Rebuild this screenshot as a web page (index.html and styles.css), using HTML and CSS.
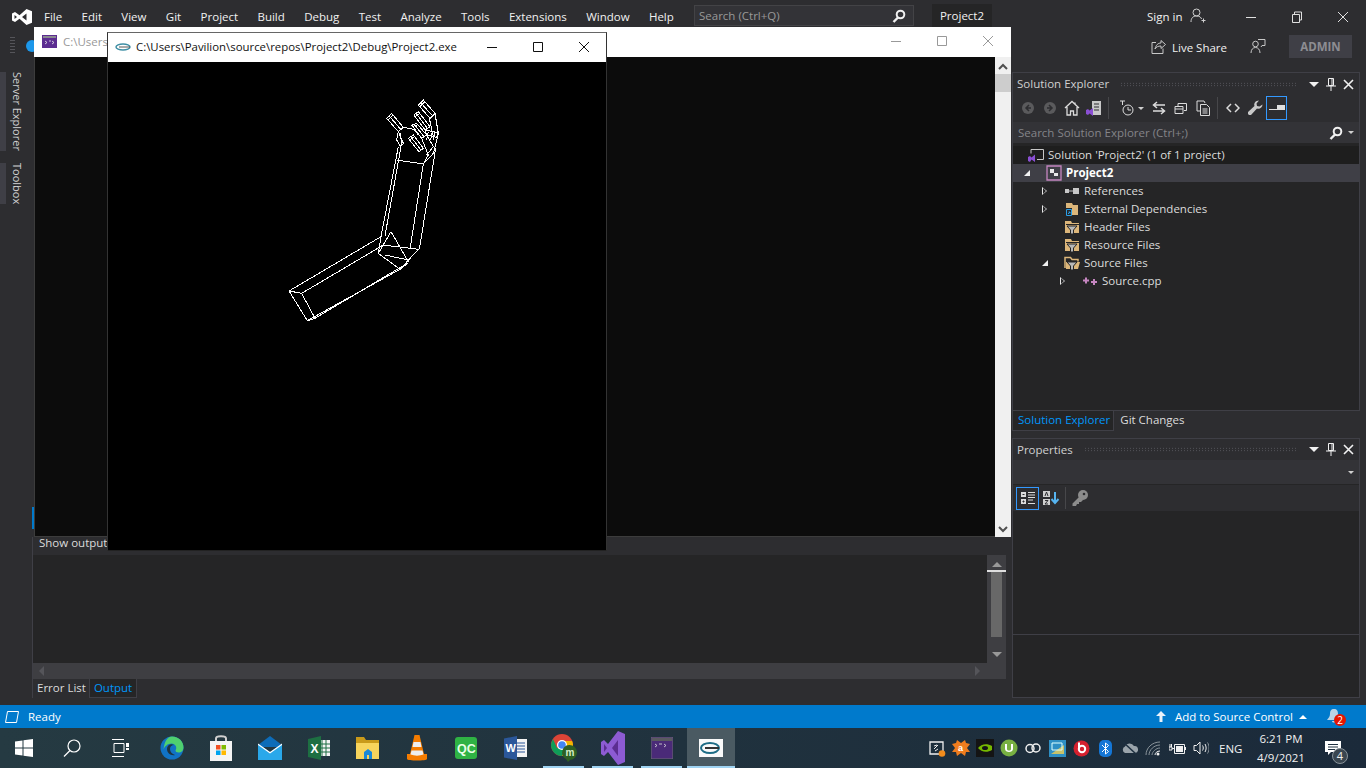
FILE: index.html
```html
<!DOCTYPE html>
<html lang="en">
  <head>
    <meta charset="UTF-8" />
    <title>Project2 - Microsoft Visual Studio</title>
    <link rel="stylesheet" href="styles.css">
  </head>

  <body>
    <div class="desktop">
      <div class="vs">
        <header class="titlebar">
          <svg class="vs-logo" width="20" height="16" viewBox="0 0 20 16"><path fill="#fff" fill-rule="evenodd" d="M14.5 0L20 2.3V13.7L14.5 16L7.5 9.8L3 13L0 11.5V4.5L3 3L7.5 6.2ZM14.5 4.5L10 8L14.5 11.5ZM2.5 6V10L5 8Z"/></svg>
          <nav class="menu">
            <span>File</span><span>Edit</span><span>View</span><span>Git</span><span>Project</span><span>Build</span><span>Debug</span><span>Test</span><span>Analyze</span><span>Tools</span><span>Extensions</span><span>Window</span><span>Help</span>
          </nav>
          <div class="quick-search">
            <span>Search (Ctrl+Q)</span>
            <svg width="14" height="14" viewBox="0 0 14 14"><circle cx="8.5" cy="5.5" r="3.8" fill="none" stroke="#f1f1f1" stroke-width="2"/><path d="M6 8.5L1.5 13" stroke="#f1f1f1" stroke-width="2.4"/></svg>
          </div>
          <div class="solution-name">Project2</div>
          <div class="signin">Sign in
            <svg width="16" height="16" viewBox="0 0 16 16" fill="none" stroke="#d0d0d0"><circle cx="6.5" cy="4.5" r="3.5"/><path d="M1 14c0-4 2-6 5.500-6s4.500 1.500 5 3M11.500 12.500h4M13.500 10.500v4"/></svg>
          </div>
          <div class="win-btns">
            <svg width="12" height="12" viewBox="0 0 12 12"><path d="M1 6.500h10" stroke="#e0e0e0"/></svg>
            <svg width="12" height="12" viewBox="0 0 12 12" fill="none" stroke="#e0e0e0"><path d="M1.500 3.500h7v8h-7zM3.500 3.500v-2.500h7v8h-2"/></svg>
            <svg width="12" height="12" viewBox="0 0 12 12"><path d="M1 1l10 10M11 1l-10 10" stroke="#e0e0e0"/></svg>
          </div>
        </header>

        <div class="cmdbar">
          <div class="gripper"></div>
          <svg class="nav-back" width="12" height="12" viewBox="0 0 12 12"><circle cx="6" cy="6" r="6" fill="#1c97ea"/></svg>
          <div class="cmd-right">
            <svg width="15" height="15" viewBox="0 0 15 15" fill="none" stroke="#c8c8c8"><path d="M5 3.500H1v11h11v-5M4 10c1-4 3-6 6-6V1.500l4.500 4-4.500 4V7c-3 0-5 1-6 3z"/></svg>
            <span class="live-share">Live Share</span>
            <svg class="feedback" width="16" height="16" viewBox="0 0 16 16" fill="none" stroke="#c8c8c8"><circle cx="5.500" cy="6" r="2.800"/><path d="M1 15c0-3.500 2-5.500 4.500-5.500S10 11.500 10 15M8 1.500h7v6h-3l-1 1.500"/></svg>
            <div class="admin">ADMIN</div>
          </div>
        </div>

        <div class="workspace">
          <aside class="strip">
            <div class="strip-tab">Server Explorer</div>
            <div class="strip-tab">Toolbox</div>
          </aside>

          <main class="center">
            <div class="doc-area"><div class="doc-mark"></div></div>
            <section class="output">
              <div class="show-row">Show output</div>
              <div class="out-body">
                <div class="out-text"></div>
                <div class="vscroll">
                  <i class="tri up"></i>
                  <div class="vline"></div>
                  <div class="vthumb"></div>
                  <i class="tri down"></i>
                </div>
              </div>
              <div class="hscroll"><i class="tri left"></i><i class="tri right"></i></div>
              <div class="out-tabs">
                <span class="out-tab">Error List</span>
                <span class="out-tab current">Output</span>
              </div>
            </section>
          </main>

          <aside class="side-col">
            <section class="panel explorer">
              <div class="panel-head">
                <span>Solution Explorer</span>
                <div class="dots"></div>
                <i class="tri down small"></i>
                <svg width="10" height="13" viewBox="0 0 10 13" fill="none" stroke="#f1f1f1"><path d="M2.500.5h5v7h-5zM0 8h10M5 8v5M6 1v6" /></svg>
                <svg width="11" height="11" viewBox="0 0 11 11"><path d="M1 1l9 9M10 1l-9 9" stroke="#f1f1f1" stroke-width="1.600"/></svg>
              </div>
              <div class="se-tools">
                <span class="tool"><svg width="16" height="16" viewBox="0 0 16 16"><circle cx="8" cy="8" r="6" fill="#5a5a5c"/><path d="M9 5L6 8l3 3M6 8h5" stroke="#2d2d30" stroke-width="1.500" fill="none"/></svg></span>
                <span class="tool"><svg width="16" height="16" viewBox="0 0 16 16"><circle cx="8" cy="8" r="6" fill="#5a5a5c"/><path d="M7 5l3 3-3 3M10 8H5" stroke="#2d2d30" stroke-width="1.500" fill="none"/></svg></span>
                <span class="tool"><svg width="16" height="16" viewBox="0 0 16 16" fill="none" stroke="#dcdcdc" stroke-width="1.300"><path d="M1 8l7-6.500L15 8M3 7v8h3.500v-4h3v4H13V7M11 2.500v2.500"/></svg></span>
                <span class="tool"><svg width="16" height="16" viewBox="0 0 16 16"><path fill="#c8c8c8" d="M6 1h9v14H6z"/><path d="M8 4h5M8 7h5M8 10h5" stroke="#2d2d30"/><path fill="#8a4fd3" d="M0 10l2-1 1.500 1.500L7 8v8l-3.500-2.500L2 15l-2-1z"/></svg></span>
                <span class="tool-sep first"></span>
                <span class="tool"><svg width="16" height="16" viewBox="0 0 16 16" fill="none" stroke="#dcdcdc"><circle cx="9" cy="10" r="5"/><path d="M9 7v3h3M1 1h5M3.500 1v4"/></svg></span>
                <span class="tool-drop"><i class="tri down tiny"></i></span>
                <span class="tool"><svg width="16" height="14" viewBox="0 0 16 14" fill="none" stroke="#dcdcdc" stroke-width="1.500"><path d="M14 4H3M6 1L2.500 4 6 7M2 10h11M10 7l3.500 3-3.500 3"/></svg></span>
                <span class="tool"><svg width="14" height="14" viewBox="0 0 14 14" fill="none" stroke="#dcdcdc"><path d="M1 5.500h8v7H1zM4 5V2.500h8.500v7H10M1 8h8"/></svg></span>
                <span class="tool"><svg width="15" height="16" viewBox="0 0 15 16" fill="none" stroke="#dcdcdc"><path d="M1 1h7l1 2M1 1v10h3M4.500 4.500h6l3 3v8h-9zM6.500 9h5M6.500 11h5M6.500 13h5"/></svg></span>
                <span class="tool-sep"></span>
                <span class="tool"><svg width="14" height="10" viewBox="0 0 14 10" fill="none" stroke="#dcdcdc" stroke-width="1.500"><path d="M5 1L1 5l4 4M9 1l4 4-4 4"/></svg></span>
                <span class="tool"><svg width="16" height="16" viewBox="0 0 16 16"><path fill="#c8c8c8" d="M15.500 4.500c0 3-3 5-5.500 4L4 15H2L1 14v-2l6.500-6c-1-2.500 1-5.500 4.500-5.500L9.500 3.500l.5 2.500 2.500.5z"/></svg></span>
                <span class="tool active"><svg width="16" height="6" viewBox="0 0 16 6"><path fill="#e0e0e0" d="M8 0h8v5H8z"/><path d="M0 4.500h8" stroke="#e0e0e0"/></svg></span>
              </div>
              <div class="se-search">
                <span>Search Solution Explorer (Ctrl+;)</span>
                <svg width="14" height="14" viewBox="0 0 14 14"><circle cx="8.500" cy="5.500" r="3.800" fill="none" stroke="#f1f1f1" stroke-width="2"/><path d="M6 8.500L1.500 13" stroke="#f1f1f1" stroke-width="2.400"/></svg>
                <i class="tri down tiny"></i>
              </div>
              <ul class="tree">
                <li class="node dark lvl-0">
                  <svg class="ico" width="16" height="14" viewBox="0 0 16 14"><path d="M3 1.500h12.500v10H9" fill="none" stroke="#c8c8c8"/><path d="M3 1.500v4" stroke="#c8c8c8"/><path fill="#8a4fd3" d="M0 9l2-1 1.500 1.500L7 6.500v7.500l-3.500-2.500L2 14l-2-1z"/></svg>
                  <span>Solution 'Project2' (1 of 1 project)</span>
                </li>
                <li class="node selected lvl-1">
                  <i class="exp open"></i>
                  <svg class="ico" width="16" height="16" viewBox="0 0 16 16"><path d="M1 1h14v14H1z" fill="none" stroke="#c586c0" stroke-width="1.300"/><path d="M4 4h4v4H4zM8 8h4v3H8z" fill="#e8e8e8"/></svg>
                  <b>Project2</b>
                </li>
                <li class="node lvl-2">
                  <i class="exp closed"></i>
                  <svg class="ico" width="16" height="8" viewBox="0 0 16 8"><path fill="#c8c8c8" d="M1 2h4v4H1zM9 1h6v6H9z"/><path d="M5 4h4" stroke="#c8c8c8"/></svg>
                  <span>References</span>
                </li>
                <li class="node lvl-2">
                  <i class="exp closed"></i>
                  <svg class="ico" width="16" height="15" viewBox="0 0 16 15"><path fill="#dcb67a" d="M2 1h6l1 2h5v10H2z"/><path fill="#252526" d="M1 6h7v9H1z"/><path d="M2.500 7.500h5v6h-5z" fill="none" stroke="#2b9fe6"/><path d="M4 12l2-2M4.500 10H6v1.500" stroke="#2b9fe6" fill="none"/></svg>
                  <span>External Dependencies</span>
                </li>
                <li class="node lvl-2">
                  <span class="exp"></span>
                  <svg class="ico" width="16" height="14" viewBox="0 0 16 14"><path fill="#dcb67a" d="M1 1h6l1 2h7v10H1z"/><path fill="#252526" d="M2 4h13v1H2z"/><path fill="#b8b8b8" stroke="#252526" d="M3 6h10L9.500 10v4h-3v-4z"/></svg>
                  <span>Header Files</span>
                </li>
                <li class="node lvl-2">
                  <span class="exp"></span>
                  <svg class="ico" width="16" height="14" viewBox="0 0 16 14"><path fill="#dcb67a" d="M1 1h6l1 2h7v10H1z"/><path fill="#252526" d="M2 4h13v1H2z"/><path fill="#b8b8b8" stroke="#252526" d="M3 6h10L9.500 10v4h-3v-4z"/></svg>
                  <span>Resource Files</span>
                </li>
                <li class="node lvl-2">
                  <i class="exp open"></i>
                  <svg class="ico" width="16" height="14" viewBox="0 0 16 14"><path fill="none" stroke="#dcb67a" stroke-width="1.500" d="M1 12V1.500h5.500L8 3.500h6v2"/><path fill="#dcb67a" d="M2 6h14l-2 7H2z"/><path fill="#b8b8b8" stroke="#252526" d="M3 6h10L9.500 10v4h-3v-4z"/></svg>
                  <span>Source Files</span>
                </li>
                <li class="node lvl-3">
                  <i class="exp closed"></i>
                  <svg class="ico" width="14" height="8" viewBox="0 0 14 8"><path fill="none" stroke="#c586c0" stroke-width="2" d="M0 3.500h6M3 .5v6M8 5h6M11 2v6"/></svg>
                  <span>Source.cpp</span>
                </li>
              </ul>
            </section>
            <div class="panel-tabs">
              <span class="panel-tab current">Solution Explorer</span>
              <span class="panel-tab">Git Changes</span>
            </div>

            <section class="panel props">
              <div class="panel-head">
                <span>Properties</span>
                <div class="dots"></div>
                <i class="tri down small"></i>
                <svg width="10" height="13" viewBox="0 0 10 13" fill="none" stroke="#f1f1f1"><path d="M2.500.5h5v7h-5zM0 8h10M5 8v5M6 1v6" /></svg>
                <svg width="11" height="11" viewBox="0 0 11 11"><path d="M1 1l9 9M10 1l-9 9" stroke="#f1f1f1" stroke-width="1.600"/></svg>
              </div>
              <div class="prop-combo"><i class="tri down tiny"></i></div>
              <div class="prop-tools">
                <span class="ptool active"><svg width="16" height="14" viewBox="0 0 16 14"><path fill="#dcdcdc" d="M1 1h5v5H1zM1 8h5v5H1z"/><path d="M2.500 3.500h2M2.500 10.500h2M3.500 9.500v2" stroke="#2d2d30"/><path d="M8 1.500h7M8 4h7M8 6.500h7M8 9h5M8 12.500h7" stroke="#dcdcdc"/></svg></span>
                <span class="ptool"><svg width="18" height="16" viewBox="0 0 18 16"><path fill="#d0d0d0" d="M1 1h7v6H1zM1 9h7v6H1z"/><path d="M3 6l1.500-4L6 6M3 10.500h3L3 14h3" stroke="#2d2d30" fill="none"/><path d="M13 2v11M9.500 9l3.500 4 3.500-4" stroke="#56b4f0" stroke-width="2" fill="none"/></svg></span>
                <span class="ptool-sep"></span>
                <span class="ptool"><svg width="18" height="18" viewBox="0 0 18 18"><circle cx="12" cy="6" r="5" fill="#8c8c8c"/><path d="M9 7L1.500 14.500V17H5l1-2h2v-2h2l2-2z" fill="#8c8c8c"/><circle cx="13" cy="5" r="1.300" fill="#2d2d30"/></svg></span>
              </div>
              <div class="prop-grid"></div>
              <div class="prop-desc"></div>
            </section>
          </aside>
        </div>
      </div>

      <footer class="status">
        <svg width="16" height="14" viewBox="0 0 16 14"><path d="M3.500 1.500h11l-2 11h-11z" fill="none" stroke="#fff"/></svg>
        <span class="ready">Ready</span>
        <svg class="up-arrow" width="10" height="11" viewBox="0 0 10 11"><path fill="#e8f2fa" d="M5 0l5 5H6.500v6h-3V5H0z"/></svg>
        <span class="source-ctl">Add to Source Control</span>
        <i class="tri up tiny"></i>
        <span class="bell">
          <svg width="14" height="15" viewBox="0 0 14 15"><path fill="#b9d3e8" d="M7 0c3 0 4 2 4 5 0 3 2 4 3 6H0c1-2 3-3 3-6 0-3 1-5 4-5zM5 12h4c0 2-4 2-4 0z"/></svg>
          <b class="badge">2</b>
        </span>
      </footer>

      <footer class="taskbar">
        <span class="task wide"><svg width="18" height="18" viewBox="0 0 18 18" fill="#fff"><path d="M0 2.500l7.500-1v7H0zM8.500 1.300L18 0v8.500H8.500zM0 9.500h7.500v7l-7.500-1zM8.500 9.500H18V18l-9.500-1.300z"/></svg></span>
        <span class="task wide"><svg width="18" height="18" viewBox="0 0 18 18" fill="none" stroke="#fff" stroke-width="1.200"><circle cx="11" cy="7" r="6"/><path d="M7 11.500L1 17.500"/></svg></span>
        <span class="task wide last"><svg width="18" height="18" viewBox="0 0 18 18" fill="none" stroke="#fff"><path d="M1 .5h12M3 4.500h10v9H3zM1 17.500h12"/><path fill="#fff" d="M15 4h3v4h-3zM15 9h3v2h-3z" stroke="none"/></svg></span>

        <span class="task"><svg width="24" height="24" viewBox="0 0 24 24"><circle cx="12" cy="12" r="11.500" fill="#1173c5"/><path fill="#4fd06f" d="M12 .5c7 0 11.500 5 11.500 11 0 3-2 5-5 5-2 0-3-1-3-2 2-3 0-7-4-7-4 0-7 3-8 6C4.500 6 7 .5 12 .5z"/><path fill="#1e3440" d="M7 13c0 4 4 7 8 6-3-1-5-3-5-6s2-4 4-4c-3-2-7 0-7 4z"/></svg></span>
        <span class="task"><svg width="24" height="26" viewBox="0 0 24 26"><path d="M7 7V3.500C7 .5 17 .5 17 3.500V7" fill="none" stroke="#d0d0d0" stroke-width="2"/><path fill="#f4f4f4" d="M1 6h22v20H1z"/><path fill="#f25022" d="M7 10h4.500v4.500H7z"/><path fill="#7fba00" d="M12.500 10H17v4.500h-4.500z"/><path fill="#00a4ef" d="M7 15.500h4.500V20H7z"/><path fill="#ffb900" d="M12.500 15.500H17V20h-4.500z"/></svg></span>
        <span class="task"><svg width="24" height="24" viewBox="0 0 24 24"><path fill="#0d6cb8" d="M12 0L0 9v2h24V9z"/><path fill="#29a8ea" d="M0 8l12 8 12-8v16H0z"/><path fill="#fff" d="M0 7.500l12 8.500 12-8.500v1.500l-12 8.500L0 9z"/></svg></span>
        <span class="task"><svg width="24" height="24" viewBox="0 0 24 24"><path fill="#f4f4f4" d="M12 4h11v16H12z"/><path d="M15 4v16M19 4v16M12 8h11M12 12h11M12 16h11" stroke="#1d6f42"/><path fill="#1d6f42" d="M1 3l13-3v24L1 21z"/><text class="glyph" x="3.500" y="16.500" font-size="12" fill="#fff">X</text></svg></span>
        <span class="task"><svg width="24" height="24" viewBox="0 0 24 24"><path fill="#c99a1a" d="M0 1h8l2 3h13v5H0z"/><path fill="#f7d45c" d="M0 7h23v16H0z"/><path fill="#1a88d8" d="M8 23v-7l4-3 4 3v7h-3v-4h-2v4z"/></svg></span>
        <span class="task"><svg width="22" height="26" viewBox="0 0 22 26"><path fill="#f57c00" d="M8.500 0h5L18 19h3v5c0 2-20 2-20 0v-5h3z"/><path fill="#eee" d="M7.500 7h7l1 5h-9zM5.500 15.500h11l1 4c-4 1.500-9 1.500-13 0z"/></svg></span>
        <span class="task"><svg width="24" height="24" viewBox="0 0 24 24"><rect x="1" y="1" width="22" height="22" rx="3" fill="#2fb344"/><text class="glyph" x="3" y="17" font-size="12.500" fill="#e8ffe8">QC</text></svg></span>
        <span class="task"><svg width="24" height="24" viewBox="0 0 24 24"><path fill="#f4f4f4" d="M11 3h13v18H11z"/><path d="M14 7h8M14 10h8M14 13h8M14 16h8" stroke="#2b579a"/><path fill="#2b579a" d="M1 2.500L14 0v24L1 21.500z"/><text class="glyph" x="2.500" y="16" font-size="11" fill="#fff">W</text></svg></span>
        <span class="task running"><svg width="26" height="28" viewBox="0 0 26 28"><circle cx="11" cy="11" r="11" fill="#db4437"/><path fill="#0f9d58" d="M0 11c0 6 5 11 11 11l5-8H6L2 5C1 7 0 9 0 11z"/><path fill="#f4b400" d="M11 22c6 0 11-5 11-11 0-2-.5-3-1-4H11l5 7z"/><circle cx="11" cy="11" r="5" fill="#fff"/><circle cx="11" cy="11" r="3.800" fill="#4285f4"/><path fill="#2e5f24" d="M18 11a7.500 7.500 0 0 1 1 15l-2 2-2-3a7.500 7.500 0 0 1 3-14z"/><text class="glyph" x="14.500" y="22" font-size="10" fill="#d8f0c8">m</text></svg></span>
        <span class="task running"><svg width="24" height="34" viewBox="0 0 24 34"><path fill="#8d5bd3" d="M17 0l7 3v28l-7 3L7 21l-4 4-3-2V11l3-2 4 4z"/><path fill="#5c2d91" d="M17 9l-6 8 6 8zM3 13v8l3-4z"/></svg></span>
        <span class="task running"><svg width="22" height="22" viewBox="0 0 22 22"><rect width="22" height="22" fill="#4a2a78" stroke="#6a6a70"/><path d="M1 1h20v3H1z" fill="#5a5a60"/><path d="M4 7l2 1.500L4 10M8 7h3M13 7l2 1.500L13 10" stroke="#ddd" fill="none" stroke-width=".8"/></svg></span>
        <span class="task current"><svg width="24" height="18" viewBox="0 0 24 18"><rect width="24" height="18" fill="#fafafa"/><ellipse cx="11" cy="9" rx="9" ry="5" fill="none" stroke="#1f6d86" stroke-width="2"/><path d="M6 9h14" stroke="#333" stroke-width="2"/></svg></span>

        <div class="tray">
          <span class="tray-ico"><svg width="17" height="17" viewBox="0 0 17 17"><path d="M1 2h13v12H1z" fill="none" stroke="#f0f0f0" stroke-width="1.300"/><path d="M5 9l4-4M5 6l3-1M9 9L6 11" stroke="#f0f0f0"/><circle cx="13" cy="13.500" r="3.300" fill="#f28c1c"/></svg></span>
          <span class="tray-ico"><svg width="18" height="18" viewBox="0 0 18 18"><path fill="#f07d1e" d="M9 4l4-3 1 3 4 1-3 4 3 4-4 0-1 4-4-3-4 3-1-4-4 0 3-4-3-4 4-1 1-3z"/><text class="glyph" x="6" y="12" font-size="9" fill="#fff">a</text></svg></span>
          <span class="tray-ico"><svg width="18" height="18" viewBox="0 0 18 18"><rect width="18" height="18" fill="#141414"/><path d="M2 9c3-4 9-5 14-2v4c-5 3-11 2-14-2z" fill="#76b900"/><ellipse cx="9" cy="9" rx="3" ry="2" fill="#141414"/></svg></span>
          <span class="tray-ico"><svg width="18" height="18" viewBox="0 0 18 18"><circle cx="9" cy="9" r="8.500" fill="#78b042"/><path d="M5 5v5c0 4 8 4 8 0V5h-2v5c0 2-4 2-4 0V5z" fill="#fff"/></svg></span>
          <span class="tray-ico"><svg width="16" height="12" viewBox="0 0 16 12" fill="none" stroke="#f0f0f0" stroke-width="1.500"><circle cx="5" cy="6.500" r="4"/><circle cx="11" cy="6" r="4"/></svg></span>
          <span class="tray-ico"><svg width="17" height="17" viewBox="0 0 17 17"><rect width="17" height="17" fill="#2e8fc4"/><path d="M2 14L15 5v9z" fill="#c8c26a"/><path d="M3 3h10v7H3z" fill="none" stroke="#dff"/></svg></span>
          <span class="tray-ico"><svg width="17" height="17" viewBox="0 0 17 17"><circle cx="8.500" cy="8.500" r="8" fill="#d5202e"/><circle cx="9" cy="9" r="3.200" fill="none" stroke="#fff" stroke-width="2"/><path d="M6 2.500v6" stroke="#fff" stroke-width="2"/></svg></span>
          <span class="tray-ico"><svg width="13" height="17" viewBox="0 0 13 17"><rect width="13" height="17" rx="5" fill="#1476d6"/><path d="M3 5l6.500 6.500L6.500 14V3l3 2.500L3 12" fill="none" stroke="#fff"/></svg></span>
          <span class="tray-ico"><svg width="17" height="12" viewBox="0 0 17 12"><path fill="#9aa4ab" d="M4 11a3.500 3.500 0 0 1 0-6.500 5 5 0 0 1 9-.5 3.500 3.500 0 0 1 1 7z"/><path d="M2 0l13 12" stroke="#1e3040" stroke-width="1.500"/></svg></span>
          <span class="tray-ico"><svg width="16" height="15" viewBox="0 0 16 15" fill="none" stroke="#8a949b"><path d="M1 14C1 7 7 1 15 1M4 14c0-5 5-10 11-10M7 14c0-3 4-7 8-7"/><path d="M10 14c0-2 2-4 5-4" stroke="#f0f0f0"/><circle cx="13" cy="13" r="1.500" fill="#f0f0f0" stroke="none"/></svg></span>
          <span class="tray-ico"><svg width="17" height="13" viewBox="0 0 17 13" fill="none" stroke="#f0f0f0"><path d="M5.500 2.500h10v9h-10z"/><path fill="#f0f0f0" stroke="none" d="M7 4h7v6H7zM16 5h1v3h-1z"/><path d="M0 5h3v3H0zM3 6.500h2.500M1 5V2M2.500 5V2"/></svg></span>
          <span class="tray-ico"><svg width="16" height="14" viewBox="0 0 16 14" fill="none" stroke="#f0f0f0"><path d="M1 4.500h2.500L7 1v12L3.500 9.500H1z"/><path d="M9.500 4.500c1 1.500 1 3.500 0 5M12 3c1.500 2.500 1.500 5.500 0 8" /><path d="M14.500 1.500c2 3 2 8 0 11" stroke="#8a949b"/></svg></span>
          <span class="lang">ENG</span>
          <span class="clock">6:21 PM<br>4/9/2021</span>
          <span class="notify">
            <svg width="16" height="15" viewBox="0 0 16 15"><path fill="#fff" d="M0 0h16v11H6l-3 3v-3H0z"/><path d="M3 3.500h10M3 6h10M3 8.500h7" stroke="#1e3040"/></svg>
            <b class="count">4</b>
          </span>
        </div>
      </footer>

      <section class="window console-win">
        <div class="win-title">
          <svg width="15" height="13" viewBox="0 0 15 13"><rect width="15" height="13" fill="#5c2d91"/><path d="M1 1h13v2H1z" fill="#8a8a90"/><path d="M3 6l2 1.500L3 9M7 6h2M10 6l2 1.500-2 1.500" stroke="#eee" fill="none" stroke-width=".8"/></svg>
          <span class="win-name">C:\Users</span>
          <span class="win-ctl pale">
            <svg width="12" height="12" viewBox="0 0 12 12"><path d="M1 6.500h10" stroke="#999"/></svg>
            <svg width="12" height="12" viewBox="0 0 12 12"><path d="M1.500 1.500h9v9h-9z" fill="none" stroke="#999"/></svg>
            <svg width="12" height="12" viewBox="0 0 12 12"><path d="M1 1l10 10M11 1l-10 10" stroke="#999"/></svg>
          </span>
        </div>
        <div class="console-body">
          <div class="console-screen"></div>
          <div class="console-scroll">
            <svg width="10" height="7" viewBox="0 0 10 7"><path d="M1 6l4-4 4 4" fill="none" stroke="#505050" stroke-width="2"/></svg>
            <div class="console-thumb"></div>
            <svg class="scroll-end" width="10" height="7" viewBox="0 0 10 7"><path d="M1 1l4 4 4-4" fill="none" stroke="#505050" stroke-width="2"/></svg>
          </div>
        </div>
      </section>

      <section class="window gl-win">
        <div class="win-title">
          <svg width="16" height="8" viewBox="0 0 16 8"><ellipse cx="8" cy="4" rx="7" ry="3" fill="none" stroke="#3f8fa5" stroke-width="1.500"/><path d="M4 4h11" stroke="#555"/></svg>
          <span class="win-name dark">C:\Users\Pavilion\source\repos\Project2\Debug\Project2.exe</span>
          <span class="win-ctl">
            <svg width="12" height="12" viewBox="0 0 12 12"><path d="M1 6.500h10" stroke="#111"/></svg>
            <svg width="12" height="12" viewBox="0 0 12 12"><path d="M1.500 1.500h9v9h-9z" fill="none" stroke="#111"/></svg>
            <svg width="12" height="12" viewBox="0 0 12 12"><path d="M1 1l10 10M11 1l-10 10" stroke="#111"/></svg>
          </span>
        </div>
        <div class="gl-body">
          <svg class="arm" width="180" height="240" viewBox="0 0 540 720" fill="none" stroke="#fff" stroke-width="3" shape-rendering="crispEdges">
            <!-- lower arm -->
            <path d="M57 603L333 440M57 603L112 692M57 603L95 610M95 610L135 685M95 610L340 465M112 692L390 538M135 685L415 518M112 692L135 685M390 538L415 518"/>
            <!-- elbow -->
            <path d="M333 440L325 490L390 538M325 490L363 425L415 515M340 465L445 478L390 538M345 495L415 510L445 478"/>
            <!-- upper arm -->
            <path d="M333 440L385 170M345 437L393 170M420 478L460 222M448 478L497 175M380 210L460 222"/>
            <!-- thumb -->
            <path d="M350 85L365 70L400 112L385 125ZM358 78L392 118M355 90L368 76"/>
            <path d="M385 125L400 160L392 170L380 150ZM390 128L396 165M385 125L400 112L432 118"/>
            <!-- fingers -->
            <path d="M445 45L460 30L495 70L480 85ZM452 38L488 78M450 50L464 36"/>
            <path d="M432 75L445 65L480 110L465 120ZM438 70L472 115M436 80L449 70"/>
            <path d="M425 105L440 100L470 135L455 145ZM432 102L462 140M428 110L443 104"/>
            <path d="M415 145L430 135L460 175L447 185ZM422 140L453 180M419 150L434 140"/>
            <!-- palm -->
            <path d="M495 70L505 130L490 190L460 222M465 120L503 128L500 142L470 135ZM475 125L470 150M487 125L482 150M495 128L490 150M478 85L490 140M455 145L475 195L460 222M470 135L490 170L470 195M432 118L445 135"/>
          </svg>
        </div>
      </section>
    </div>
  </body>
</html>
```

FILE: styles.css
```css
* {
  box-sizing: border-box;
}

html,
body {
  margin: 0;
  height: 100%;
}

body {
  font-family: "Open Sans", "Noto Sans", sans-serif;
  font-size: 11.5px;
  color: #f1f1f1;
  overflow: hidden;
}

ul {
  list-style: none;
  margin: 0;
  padding: 0;
}

svg {
  flex: none;
  display: block;
}

.glyph {
  font-family: "Liberation Sans", sans-serif;
  font-weight: bold;
  stroke: none;
}

.desktop {
  position: relative;
  width: 1366px;
  height: 768px;
  background: #2d2d30;
  overflow: hidden;
}

.vs {
  height: 705px;
  display: flex;
  flex-direction: column;
}

/* title bar */
.titlebar {
  height: 34px;
  display: flex;
  align-items: center;
  padding-left: 12px;
}

.menu {
  width: 630px;
  display: flex;
  justify-content: space-between;
  margin: -2px 0 0 12px;
}

.quick-search {
  width: 220px;
  height: 21px;
  margin: -3px 0 0 20px;
  padding: 0 7px 0 4px;
  display: flex;
  align-items: center;
  justify-content: space-between;
  background: #333337;
  border: 1px solid #434346;
  color: #999;
}

.solution-name {
  width: 60px;
  height: 23px;
  margin: -3px 0 0 18px;
  background: #252526;
  text-align: center;
  line-height: 23px;
}

.signin {
  display: flex;
  align-items: center;
  gap: 8px;
  margin: -2px 0 0 155px;
  white-space: nowrap;
}

.win-btns {
  display: flex;
  gap: 34px;
  margin-left: 39px;
}

/* command bar */
.cmdbar {
  height: 38px;
  display: flex;
  padding-left: 10px;
}

.gripper {
  width: 5px;
  height: 17px;
  margin-top: 3px;
  background: repeating-linear-gradient(#55555a 0 1px, transparent 1px 3px);
}

.nav-back {
  margin: 6px 0 0 11px;
}

.cmd-right {
  display: flex;
  align-items: center;
  height: 24px;
  margin: 0 14px 0 auto;
}

.live-share {
  margin: 2px 0 0 6px;
}

.feedback {
  margin-left: 23px;
}

.admin {
  width: 63px;
  height: 23px;
  margin-left: 23px;
  background: #3f3f46;
  color: #8d8d92;
  font-weight: 700;
  text-align: center;
  line-height: 23px;
}

/* main area */
.workspace {
  flex: 1;
  display: flex;
  min-height: 0;
}

.strip {
  width: 32px;
  display: flex;
  flex-direction: column;
  align-items: flex-start;
  gap: 12px;
}

.strip-tab {
  writing-mode: vertical-rl;
  border-left: 6px solid #3f3f46;
  padding-left: 5px;
  font-size: 11px;
  color: #d0d0d0;
  line-height: 12px;
}

.center {
  width: 974px;
  display: flex;
  flex-direction: column;
}

.doc-area {
  flex: 1;
}

.doc-mark {
  width: 2px;
  height: 22px;
  margin-top: 435px;
  background: #007acc;
}

.output {
  height: 161px;
  flex: none;
  display: flex;
  flex-direction: column;
  margin-bottom: 7px;
  border-left: 1px solid #3f3f46;
}

.show-row {
  height: 18px;
  padding-left: 6px;
  line-height: 12px;
  color: #dcdcdc;
}

.out-body {
  flex: 1;
  display: flex;
  min-height: 0;
}

.out-text {
  flex: 1;
  background: #252526;
}

.vscroll {
  width: 19px;
  display: flex;
  flex-direction: column;
  align-items: center;
  padding-top: 7px;
  background: #3e3e42;
}

.vline {
  width: 100%;
  height: 2px;
  margin-top: 3px;
  background: #dedede;
}

.vthumb {
  width: 11px;
  height: 65px;
  background: #686868;
}

.vscroll .tri.down {
  margin-top: 15px;
}

.hscroll {
  height: 16px;
  flex: none;
  display: flex;
  align-items: center;
  justify-content: space-between;
  padding: 0 26px 0 6px;
  background: #3e3e42;
}

.out-tabs {
  height: 19px;
  flex: none;
  display: flex;
  padding-left: 1px;
}

.out-tab {
  padding: 1px 3px 0 3px;
  color: #dcdcdc;
}

.out-tab.current {
  padding: 1px 4px 0;
  color: #0097fb;
  background: #252526;
  border: 1px solid #3f3f46;
  border-top: 0;
}

/* little triangles */
.tri {
  display: block;
  flex: none;
  width: 0;
  height: 0;
  border-style: solid;
  border-color: transparent;
}

.tri.up {
  border-width: 0 5px 5px;
  border-bottom-color: #999;
}

.tri.down {
  border-width: 5px 5px 0;
  border-top-color: #999;
}

.tri.left {
  border-width: 5px 5px 5px 0;
  border-right-color: #55555a;
}

.tri.right {
  border-width: 5px 0 5px 5px;
  border-left-color: #55555a;
}

.tri.small {
  border-top-color: #f1f1f1;
}

.tri.tiny {
  border-width: 3px 3px 0;
  border-top-color: #d0d0d0;
}

.tri.up.tiny {
  border-width: 0 4px 4px;
  border-bottom-color: #fff;
}

/* right column */
.side-col {
  width: 348px;
  flex: none;
  margin: 0 6px 7px 6px;
  display: flex;
  flex-direction: column;
}

.panel {
  display: flex;
  flex-direction: column;
  border: 1px solid #3f3f46;
}

.explorer {
  height: 339px;
  background: #252526;
}

.panel-head {
  height: 23px;
  flex: none;
  display: flex;
  align-items: center;
  gap: 7px;
  padding: 0 5px 0 4px;
  background: #2d2d30;
  color: #d0d0d0;
}

.panel-head span {
  margin-top: -2px;
}

.props .panel-head {
  height: 21px;
}

.props .panel-head span {
  margin-top: 0;
}

.dots {
  flex: 1;
  height: 5px;
  margin: 0 4px;
  background: radial-gradient(#5a5a60 0.6px, transparent 0.9px) 0 0 / 3px 2.5px;
}

.se-tools {
  height: 26px;
  flex: none;
  display: flex;
  padding-left: 4px;
  background: #2d2d30;
}

.tool {
  width: 22px;
  height: 24px;
  display: flex;
  align-items: center;
  justify-content: center;
}

.tool.active {
  width: 21px;
  border: 1px solid #3399ff;
}

.tool-sep {
  width: 1px;
  height: 22px;
  margin: 1px 4px 0 3px;
  background: #47474a;
}

.tool-sep.first {
  margin-right: 7px;
}

.tool-drop {
  width: 10px;
  padding-top: 11px;
}

.se-search {
  height: 21px;
  flex: none;
  display: flex;
  align-items: center;
  padding: 0 5px;
  background: #333337;
  color: #848489;
}

.se-search span {
  flex: 1;
}

.se-search .tri {
  margin-left: 5px;
}

.tree {
  flex: 1;
  padding-top: 3px;
}

.node {
  height: 18px;
  display: flex;
  align-items: center;
  white-space: nowrap;
  color: #dcdcdc;
}

.node > span:last-child,
.node > b {
  margin-top: -2px;
}

.node.dark {
  background: #1e1e1e;
}

.node.selected {
  background: #3f3f46;
  color: #fff;
}

.lvl-0 {
  padding-left: 15px;
}

.lvl-1 {
  padding-left: 11px;
}

.lvl-2 {
  padding-left: 29px;
}

.lvl-3 {
  padding-left: 47px;
}

.exp {
  width: 8px;
  height: 8px;
  margin-right: 14px;
  flex: none;
}

.exp.closed {
  position: relative;
  width: 0;
  height: 0;
  margin-right: 17px;
  border-style: solid;
  border-width: 4.500px 0 4.500px 5px;
  border-color: transparent transparent transparent #e8e8e8;
}

.exp.closed::after {
  content: "";
  position: absolute;
  left: -4px;
  top: -3px;
  border-style: solid;
  border-width: 3px 0 3px 3px;
  border-color: transparent transparent transparent #252526;
}

.exp.open {
  width: 0;
  height: 0;
  margin-right: 16px;
  border-style: solid;
  border-width: 0 0 6px 6px;
  border-color: transparent transparent #f1f1f1;
}

.ico {
  width: 16px;
  margin-right: 4px;
}

.panel-tabs {
  height: 20px;
  flex: none;
  display: flex;
}

.panel-tab {
  padding: 1px 7px 0 6px;
  color: #dcdcdc;
}

.panel-tab.current {
  padding: 1px 3px 0 5px;
  color: #0097fb;
  background: #252526;
  border: 1px solid #3f3f46;
  border-top: 0;
}

.props {
  flex: 1;
  margin-top: 7px;
}

.prop-combo {
  height: 24px;
  flex: none;
  display: flex;
  align-items: center;
  justify-content: flex-end;
  padding-right: 5px;
  background: #333337;
}

.prop-tools {
  height: 27px;
  flex: none;
  display: flex;
  align-items: center;
  padding-left: 3px;
  border-top: 1px solid #252526;
  background: #2d2d30;
}

.ptool {
  width: 23px;
  height: 23px;
  display: flex;
  align-items: center;
  justify-content: center;
}

.ptool.active {
  border: 1px solid #3399ff;
}

.ptool-sep {
  width: 1px;
  height: 22px;
  margin: 0 2px 0 3px;
  background: #47474a;
}

.prop-grid {
  height: 124px;
  flex: none;
  background: #252526;
  border-bottom: 1px solid #3f3f46;
}

.prop-desc {
  flex: 1;
  background: #252526;
}

/* status bar */
.status {
  height: 23px;
  display: flex;
  align-items: center;
  padding-left: 4px;
  background: #007acc;
  color: #fff;
}

.ready {
  margin-left: 8px;
}

.up-arrow {
  margin-left: auto;
}

.source-ctl {
  margin: 0 6px 0 9px;
}

.bell {
  position: relative;
  margin: 0 25px 0 20px;
}

.badge {
  position: absolute;
  left: 7px;
  top: 5px;
  width: 12px;
  height: 12px;
  border-radius: 50%;
  background: #e51400;
  font-size: 10px;
  font-weight: 400;
  line-height: 12px;
  text-align: center;
}

/* task bar */
.taskbar {
  height: 40px;
  display: flex;
  background: linear-gradient(90deg, #253a42, #1b2a3a);
}

.task {
  width: 49px;
  height: 40px;
  display: flex;
  align-items: center;
  justify-content: center;
  position: relative;
}

.task.wide {
  width: 48px;
}

.task.last {
  margin-right: 3px;
}

.task.running::after,
.task.current::after {
  content: "";
  position: absolute;
  left: 4px;
  right: 4px;
  bottom: 0;
  height: 2px;
  background: #9fd3f2;
}

.task.current {
  margin-left: 1px;
  width: 48px;
  background: #4a5a62;
}

.task.current::after {
  left: 0;
  right: 0;
}

.tray {
  flex: 1;
  display: flex;
  align-items: center;
  padding-left: 190px;
}

.tray-ico {
  width: 24px;
  display: flex;
  justify-content: center;
}

.lang {
  width: 24px;
  margin-left: 6px;
}

.clock {
  width: 76px;
  text-align: center;
  line-height: 19px;
}

.notify {
  position: relative;
  margin-left: 6px;
}

.count {
  position: absolute;
  left: 7px;
  top: 7px;
  width: 16px;
  height: 16px;
  border-radius: 50%;
  background: #3a4650;
  border: 1px solid #8a949b;
  font-size: 11px;
  font-weight: 400;
  line-height: 14px;
  text-align: center;
}

/* floating windows */
.window {
  position: absolute;
  display: flex;
  flex-direction: column;
}

.console-win {
  left: 34px;
  top: 27px;
  width: 977px;
  height: 510px;
}

.gl-win {
  left: 107px;
  top: 32px;
  width: 500px;
  height: 519px;
  border: 1px solid #333;
  border-top-color: #666;
  border-bottom-color: #222;
}

.win-title {
  height: 30px;
  flex: none;
  display: flex;
  align-items: center;
  padding: 0 0 2px 8px;
  background: #fff;
}

.gl-win .win-title {
  height: 29px;
  padding-left: 7px;
}

.win-name {
  margin-left: 6px;
  color: #999;
}

.win-name.dark {
  margin-left: 5px;
  font-size: 11.4px;
  color: #111;
}

.win-ctl {
  margin-left: auto;
  display: flex;
  gap: 34px;
  padding-right: 17px;
}

.gl-win .win-ctl {
  padding-right: 16px;
}

.console-body {
  flex: 1;
  display: flex;
  min-height: 0;
}

.console-screen {
  flex: 1;
  background: #0c0c0c;
  border-left: 1px solid #3c3c3c;
  border-bottom: 1px solid #3c3c3c;
}

.console-scroll {
  width: 16px;
  display: flex;
  flex-direction: column;
  align-items: center;
  padding-top: 6px;
  background: #f0f0f0;
}

.console-thumb {
  width: 16px;
  height: 18px;
  margin-top: 4px;
  background: #cdcdcd;
}

.scroll-end {
  margin-top: auto;
  margin-bottom: 4px;
}

.gl-body {
  flex: 1;
  background: #000;
}

.arm {
  margin: 28px 0 0 162px;
}
```
